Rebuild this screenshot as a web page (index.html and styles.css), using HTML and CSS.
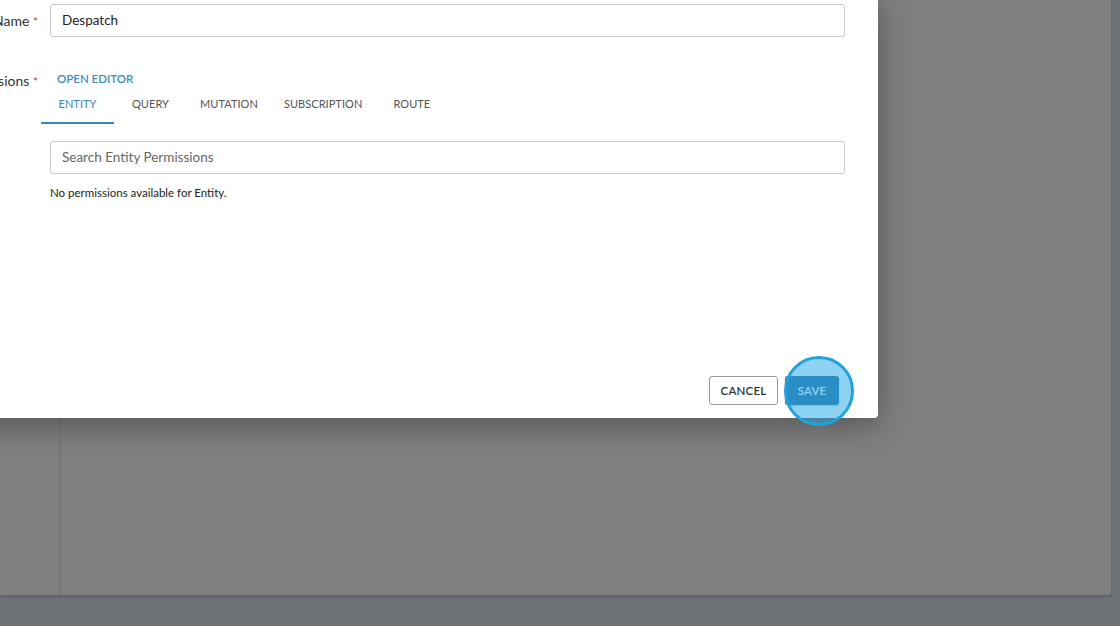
FILE: index.html
```html
<!DOCTYPE html>
<html lang="en">
<head>
<meta charset="utf-8">
<title>Edit Role</title>
<link rel="stylesheet" href="styles.css">
</head>
<body>
<div class="page">
  <div class="panel">
    <div class="sidebar"></div>
    <div class="main"></div>
  </div>
</div>

<div class="modal">
  <div class="form">
    <div class="row row-name">
      <label class="label">Name <span class="req">*</span></label>
      <div class="field">
        <div class="input">Despatch</div>
      </div>
    </div>
    <div class="row row-perms">
      <label class="label">Permissions <span class="req">*</span></label>
      <div class="field">
        <a class="link">OPEN EDITOR</a>
        <div class="tabs">
          <div class="tab active">ENTITY</div>
          <div class="tab">QUERY</div>
          <div class="tab">MUTATION</div>
          <div class="tab">SUBSCRIPTION</div>
          <div class="tab">ROUTE</div>
        </div>
        <div class="input search">Search Entity Permissions</div>
        <p class="empty">No permissions available for Entity.</p>
      </div>
    </div>
  </div>
  <div class="footer">
    <button class="btn btn-cancel">CANCEL</button>
    <div class="save-wrap">
      <button class="btn btn-save">SAVE</button>
      <span class="highlight"></span>
    </div>
  </div>
</div>
</body>
</html>
```

FILE: styles.css
```css
* { box-sizing: border-box; }

html, body {
  margin: 0;
  padding: 0;
  width: 1120px;
  height: 626px;
  overflow: hidden;
}

body {
  background: #6e7276;
  font-family: Lato, "Liberation Sans", sans-serif;
  color: #222;
  position: relative;
}

.page {
  width: 1120px;
  height: 626px;
}

.panel {
  width: 1112px;
  height: 596px;
  background: #7f7f7f;
  border-right: 1px solid #6c6c6c;
  border-bottom: 1px solid #666;
  border-bottom-right-radius: 4px;
  display: flex;
  box-shadow: 0 1px 2px rgba(0,0,0,0.15);
}

.sidebar {
  width: 61px;
  border-right: 1px solid #717171;
}

.main { flex: 1; }

.modal {
  position: absolute;
  left: -100px;
  top: 0;
  width: 978px;
  height: 418px;
  background: #fff;
  border-bottom-right-radius: 4px;
  box-shadow: 0 6px 30px rgba(0,0,0,0.35);
  display: flex;
  flex-direction: column;
  padding: 4px 33px 13px 0;
}

.row {
  display: grid;
  grid-template-columns: 138px 1fr;
  column-gap: 12px;
}

.label {
  text-align: right;
  font-size: 14px;
  color: #333;
  white-space: nowrap;
}

.req { color: #d0342c; font-size: 12px; }

.row-name .label { line-height: 33px; }

.row-perms { margin-top: 34px; }
.row-perms .label { line-height: 16px; padding-top: 1px; }

.input {
  height: 33px;
  border: 1px solid #c8c8c8;
  border-radius: 3px;
  padding: 0 11px;
  font-size: 13.5px;
  line-height: 31px;
  color: #222;
}

.link {
  display: block;
  margin-left: 7px;
  font-size: 11.5px;
  line-height: 14px;
  color: #3a8cbf;
  font-weight: 600;
}

.tabs {
  display: flex;
  margin-left: -9px;
  margin-top: 4px;
}

.tab {
  min-width: 73px;
  padding: 7px 13px 11px;
  text-align: center;
  font-size: 11px;
  line-height: 14px;
  color: #555;
  letter-spacing: 0.05px;
  border-bottom: 2px solid transparent;
}

.tab.active {
  color: #3a87b5;
  border-bottom-color: #3a87b5;
}

.search {
  margin-top: 17px;
  height: 33px;
  line-height: 31px;
  color: #666;
}

.empty {
  margin: 12px 0 0;
  font-size: 11.5px;
  line-height: 14px;
  color: #222;
}

.footer {
  margin-top: auto;
  display: flex;
  justify-content: flex-end;
  gap: 7px;
  padding-right: 6px;
}

.btn {
  height: 29px;
  border-radius: 3px;
  font-family: Lato, "Liberation Sans", sans-serif;
  font-size: 11.5px;
  font-weight: 600;
  letter-spacing: 0.2px;
  padding: 0 10px;
  cursor: pointer;
}

.btn-cancel {
  background: #fff;
  border: 1px solid #999;
  color: #2a3440;
  width: 69px;
}

.save-wrap { position: relative; }

.btn-save {
  background: #3670a2;
  border: none;
  color: #fff;
  width: 54px;
  box-shadow: 0 1px 2px rgba(0,0,0,0.2);
}

.highlight {
  position: absolute;
  left: -1px;
  top: -20px;
  width: 70px;
  height: 70px;
  border-radius: 50%;
  background: rgba(30,170,230,0.5);
  border: 3px solid #1fa3de;
  pointer-events: none;
}
```
